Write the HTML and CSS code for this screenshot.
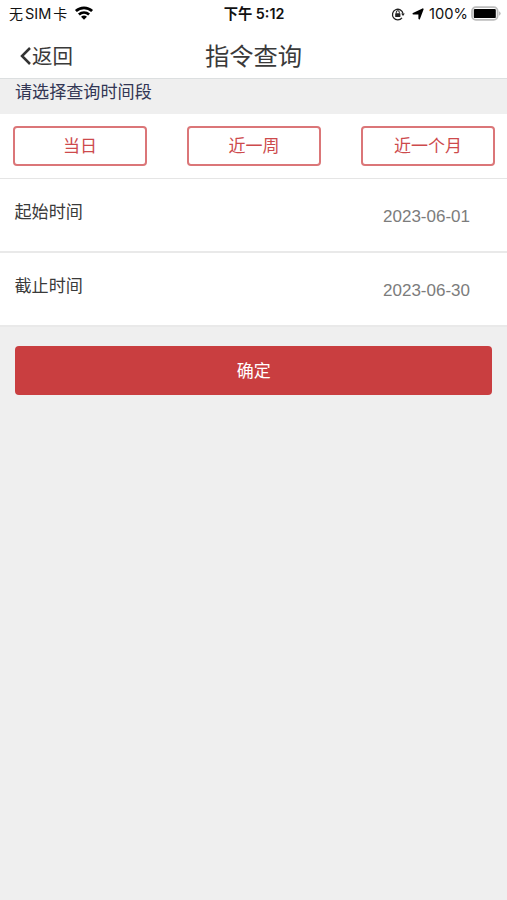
FILE: index.html
```html
<!DOCTYPE html>
<html lang="zh-CN">
<head>
<meta charset="utf-8">
<meta name="viewport" content="width=device-width, initial-scale=1">
<title>指令查询</title>
<link rel="stylesheet" href="styles.css">
</head>
<body>
<div class="status">
  <div class="status-left"><span class="carrier">无<span class="sim">SIM</span>卡</span>
    <svg class="wifi" width="20" height="14" viewBox="0 0 20 14" fill="none" stroke="#000" stroke-width="2.7"><path d="M1.9 5.1C6.4.8 13.6.8 18.1 5.1"/><path d="M4.9 8.6C7.9 5.9 12.1 5.9 15.1 8.6"/><path d="M7 10.7Q10 8.5 13 10.7L10 13.7Z" fill="#000" stroke="none"/></svg>
  </div>
  <div class="clock">下午 5:12</div>
  <div class="status-right">
    <svg width="14" height="14" viewBox="0 0 14 14" fill="none" stroke="#222"><path d="M11 10.8A5.3 5.3 0 1 1 12 6.6" stroke-width="1.3"/><path d="M10.1 6.4h3.7l-1.8 2.7z" fill="#222" stroke="none"/><rect x="4.2" y="6.2" width="5.2" height="3.8" rx=".5" fill="#222" stroke="none"/><path d="M5.3 6.5V5.2a1.5 1.5 0 0 1 3 0v1.3"/></svg>
    <svg class="arrow" width="12" height="12" viewBox="0 0 12 12"><path d="M10.8 1.2L7.2 10.6V5.7H1.3Z" stroke="#000" stroke-width="1.6" stroke-linejoin="round"/></svg>
    <span class="percent">100%</span>
    <svg class="battery" width="30" height="16" viewBox="0 0 30 16"><rect x="1" y="1.2" width="25.6" height="12.6" rx="3.8" fill="none" stroke="#bcbcbc" stroke-width="1.8"/><rect x="2.8" y="2.9" width="22" height="9.2" rx="1.2"/><path d="M28 5.2q1.7.7 1.7 2.3T28 9.8z" fill="#bcbcbc"/></svg>
  </div>
</div>
<header class="nav">
  <div class="back"><svg width="12" height="20" viewBox="0 0 12 20" fill="none" stroke="#333" stroke-width="2.5"><path d="M10 2L2 10l8 8"/></svg><span>返回</span></div>
  <h1>指令查询</h1>
</header>
<div class="hint">请选择查询时间段</div>
<div class="ranges"><button>当日</button><button>近一周</button><button>近一个月</button></div>
<div class="row"><span>起始时间</span><span class="date">2023-06-01</span></div>
<div class="row"><span>截止时间</span><span class="date">2023-06-30</span></div>
<button class="submit">确定</button>
</body>
</html>
```
FILE: styles.css
```css
* { box-sizing: border-box; }
body { margin: 0; min-height: 900px; background: #efefef; color: #3a3a3a; font-family: "Liberation Sans", "Noto Sans CJK SC", sans-serif; }
button { font: inherit; margin: 0; padding: 0; }
.status { height: 28px; background: #fff; color: #111; display: grid; grid-template-columns: 1fr auto 1fr; align-items: center; padding: 0 6px 0 9px; font-family: Inter, "Noto Sans CJK SC", sans-serif; line-height: 28px; }
.status-left, .status-right { display: flex; align-items: center; }
.status-right { justify-content: flex-end; }
.carrier { font-size: 14px; white-space: nowrap; }
.sim { margin: 0 2px; font-size: 14.5px; }
.wifi { margin: 0 0 2px 7px; }
.clock { margin-right: 2px; font-size: 14.3px; font-weight: 600; }
.arrow { margin: 0 5px 0 7px; }
.percent { font-size: 14.7px; }
.battery { margin-left: 3px; }
.nav { height: 51px; background: #fff; border-bottom: 1px solid #dcdfe0; display: grid; grid-template-columns: 1fr auto 1fr; align-items: center; padding: 8px 0 0 20px; }
.back { display: flex; align-items: center; font-size: 20.5px; line-height: 28px; }
.back svg { margin-bottom: 2px; }
.nav h1 { margin: 0 20px 0 0; font-size: 24.3px; line-height: 32px; font-weight: 400; }
.hint { height: 35px; padding-left: 15px; font-size: 17.1px; line-height: 28px; color: #323654; }
.ranges { height: 65px; background: #fff; border-bottom: 1px solid #e5e5e5; display: flex; justify-content: space-between; padding: 12px 12px 0 13px; }
.ranges button { width: 134px; height: 40px; padding-top: 2px; border: 2px solid #db7678; border-radius: 4px; background: #fff; color: #cd4a4c; font-size: 17px; line-height: 34px; }
.row { height: 74px; background: #fff; border-bottom: 2px solid #e9e9e9; display: flex; justify-content: space-between; padding: 0 37px 0 14.5px; font-size: 17.1px; line-height: 68px; }
.date { color: #7c7c7c; font-size: 17px; line-height: 76px; }
.submit { display: block; width: 477px; height: 49px; margin: 18.5px 0 0 15.3px; padding-bottom: 1px; border: 0; border-radius: 4px; background: #c93e40; color: #fff; font-size: 17px; }
```
